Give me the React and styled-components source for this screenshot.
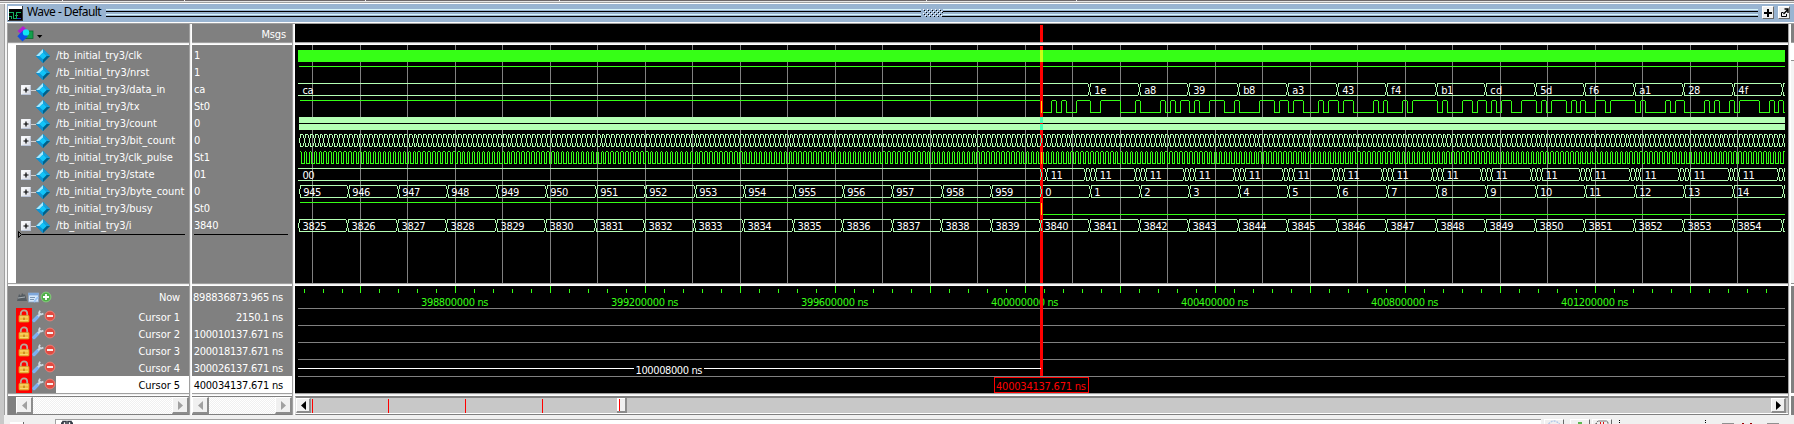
import React from "react";
import styled, { createGlobalStyle, css } from "styled-components";

const UI_FONT = '"DejaVu Sans Condensed", "DejaVu Sans", "Liberation Sans", sans-serif';

const GlobalStyle = createGlobalStyle`
  * { box-sizing: border-box; }
  html, body { margin: 0; padding: 0; background: #f0f0f0; }
  svg { display: block; flex: none; }
`;

const LIME = "#36ff16";
const MINT = "#b4ffb4";
const GREY = "#808080";

/* ---------- window frame ---------- */

const Page = styled.div`
  width: 1794px;
  height: 424px;
  display: flex;
  flex-direction: column;
  overflow: hidden;
  background: #f0f0f0;
  font-family: ${UI_FONT};
  font-stretch: condensed;
  font-size: 11px;
  color: #fff;
`;

const TopStrip = styled.div`
  height: 4px;
  flex: none;
  display: flex;
  border-bottom: 1px solid #fff;
  background: linear-gradient(#6e686a 0 1px, #e4e4e4 1px 2px, #a0a0a0 2px 3px);
`;

const StripCell = styled.div`
  width: ${(p) => p.$w}px;
  height: 1px;
  flex: none;
  border-right: 1px solid #f0f0f0;
`;

const Main = styled.div`
  display: flex;
  height: 411px;
  flex: none;
`;

const LeftEdge = styled.div`
  width: 7px;
  flex: none;
  background: linear-gradient(90deg, #c8c8c8 0 4px, #a0a0a0 4px 5px, #f4f4f4 5px 7px);
`;

const Window = styled.div`
  width: 1787px;
  flex: none;
  display: flex;
  flex-direction: column;
`;

const TitleBar = styled.div`
  height: 20px;
  flex: none;
  display: flex;
  align-items: center;
  padding-left: 1px;
  background: #99b4d1;
  border-bottom: 1px solid #a0a0a0;
  box-shadow: inset 0 -1px 0 #fff;
`;

const TitleText = styled.div`
  width: 79px;
  margin-left: 4px;
  padding-bottom: 3px;
  flex: none;
  font-family: "Noto Sans", "Open Sans", sans-serif;
  font-size: 12px;
  line-height: 16px;
  letter-spacing: -0.55px;
  white-space: nowrap;
  color: #000;
`;

const Stripes = styled.div`
  width: ${(p) => p.$w}px;
  height: 10px;
  flex: none;
  align-self: flex-start;
  margin-top: 4px;
  background: linear-gradient(
    #99b4d1 0 1px, #d8f6fc 1px 2px, #99b4d1 2px 3px, #000 3px 4px,
    #99b4d1 4px 6px, #d8f6fc 6px 7px, #99b4d1 7px 8px, #000 8px 9px, #99b4d1 9px
  );
`;

const GripBox = styled.div`
  align-self: flex-start;
  margin-top: 4px;
`;

const TitleButton = styled.div`
  width: 12px;
  height: 13px;
  flex: none;
  margin: 0 0 2px 4px;
  display: flex;
  align-items: center;
  justify-content: center;
  background: #f0f0f0;
  border: 1px solid;
  border-color: #fff #696969 #696969 #fff;
`;

const Panes = styled.div`
  display: flex;
  height: 391px;
  border-left: 1px solid #a0a0a0;
`;

const Pane = styled.div`
  width: ${(p) => p.$w}px;
  flex: none;
  display: flex;
  flex-direction: column;
  background: ${(p) => p.$bg || GREY};
`;

const ColumnSash = styled.div`
  width: 3px;
  flex: none;
  background: linear-gradient(90deg, #a0a0a0 0 1px, #f0f0f0 1px 2px, #fff 2px 3px);
`;

const RowSash = styled.div`
  height: 3px;
  flex: none;
  background: linear-gradient(#a0a0a0 0 1px, #f0f0f0 1px 2px, #fff 2px 3px);
`;

const Header = styled.div`
  height: 18px;
  flex: none;
  display: flex;
  align-items: center;
  justify-content: ${(p) => (p.$right ? "flex-end" : "flex-start")};
  padding: 2px 6px 0 9px;
`;

/* ---------- signal list ---------- */

const SignalBody = styled.div`
  height: 238px;
  flex: none;
  padding-top: 2px;
  ${(p) => p.$gutter && css`border-left: 8px solid #fff;`}
`;

const SignalRow = styled.div`
  height: 17px;
  display: flex;
  align-items: center;
  padding-left: ${(p) => (p.$value ? 2 : 5)}px;
`;

const Label = styled.span`
  white-space: pre;
  line-height: 13px;
  letter-spacing: ${(p) => p.$ls || 0}px;
  color: ${(p) => (p.$dark ? "#000" : "#fff")};
`;

const SignalName = styled(Label)`
  margin-left: 6px;
`;

const ExpanderSlot = styled.div`
  width: 15px;
  height: 17px;
  flex: none;
  display: flex;
  align-items: center;
  padding-top: 1px;
`;

const Expander = styled.div`
  width: 10px;
  height: 10px;
  display: flex;
  align-items: center;
  justify-content: center;
  border-radius: 1px;
  background: linear-gradient(135deg, #fff, #d4d8e2);
  border: 1px solid #f4f6fa;
  border-right-color: #b9c3d6;
  border-bottom-color: #b9c3d6;
`;

const Stem = styled.div`
  width: 5px;
  height: 1px;
  background: #d0d0d0;
`;

const InsertLine = styled.div`
  display: flex;
  align-items: center;
  height: 7px;
  margin: -3px ${(p) => p.$mr}px 0 ${(p) => p.$ml}px;
`;

const InsertRule = styled.div`
  flex: 1;
  height: 1px;
  background: #000;
`;

/* ---------- cursor list ---------- */

const CursorBody = styled.div`
  height: 107px;
  flex: none;
`;

const CursorRow = styled.div`
  height: ${(p) => (p.$now ? 22 : 17)}px;
  display: flex;
  padding-left: ${(p) => p.$pl || 0}px;
  white-space: nowrap;
`;

const CursorIcons = styled.div`
  width: 40px;
  flex: none;
  display: flex;
  background: ${(p) => (p.$locked ? "linear-gradient(90deg, #f00 0 16px, #808080 16px)" : "none")};
`;

const CursorCell = styled.div`
  flex: 1;
  min-width: 0;
  display: flex;
  align-items: center;
  justify-content: flex-end;
  padding: 1px 9px 0 0;
  background: ${(p) => (p.$active ? "#fff" : "transparent")};
`;

/* ---------- scroll bars ---------- */

const ScrollArea = styled.div`
  height: 19px;
  flex: none;
  display: flex;
  padding: 1px 0 1px ${(p) => p.$pl || 0}px;
  background: ${GREY};
`;

const Track = styled.div`
  flex: 1;
  background: repeating-conic-gradient(#f0f0f0 0 25%, #fff 0 50%) 0 0 / 2px 2px;
`;

const ArrowButton = styled.div`
  width: ${(p) => p.$w || 17}px;
  height: ${(p) => p.$h || 17}px;
  flex: none;
  display: flex;
  align-items: center;
  justify-content: center;
  background: #f0f0f0;
  border: solid;
  border-width: 1px 2px 2px 1px;
  border-color: #fff #8c8c8c #8c8c8c #fff;
`;

const WaveScroll = styled.div`
  height: 19px;
  flex: none;
  display: flex;
  background: #c8c8c8;
  border-left: 1px solid #e0e0e0;
  border-top: 2px solid #808080;
  border-bottom: 1px solid #808080;
  box-shadow: inset 0 -1px 0 #fff;
`;

const RightDock = styled.div`
  width: 6px;
  flex: none;
  background:
    linear-gradient(90deg, #a0a0a0 0 1px, #f4f4f4 1px 2px, #fff 2px 3px, transparent 3px),
    linear-gradient(#808080 0 18px, #a0a0a0 18px 19px, #fff 19px 36px, #909090 36px 37px, #f4f4f4 37px 259px,
      #909090 259px 260px, #fff 260px 262px, #808080 262px 369px, #fff 369px 372px, #808080 372px);
`;

/* ---------- bottom toolbar ---------- */

const Toolbar = styled.div`
  height: 9px;
  flex: none;
  display: flex;
  align-items: flex-end;
  border-left: 4px solid #c8c8c8;
  background: #f0f0f0;
`;

const ToolTab = styled.div`
  width: 14px;
  height: 2px;
  margin: 0 31px 0 6px;
  background: #fff;
  border-right: 1px solid #696969;
`;

const SearchField = styled.div`
  width: 1486px;
  height: 5px;
  flex: none;
  padding-left: 5px;
  background: #fff;
  border-top: 1px solid #a0a0a0;
  border-left: 1px solid #a0a0a0;
`;

const ToolButton = styled.div`
  width: 20px;
  height: 5px;
  flex: none;
  margin-left: ${(p) => p.$ml}px;
  display: flex;
  justify-content: center;
  border: solid;
  border-width: 1px 1px 0 1px;
  border-color: #fff #696969 #fff #fff;
`;

/* ---------- drawings ---------- */

const Glyph = styled.text`
  font-family: ${UI_FONT};
  font-stretch: condensed;
  font-size: 11px;
`;

const Diamond = () => (
  <svg width="14" height="14" viewBox="0 0 14 14">
    <path d="M7 0L14 7L7 14L0 7Z" fill="#0086c4" />
    <path d="M7 0L0 7H3.6L7 3.6Z" fill="#a6eaff" />
    <path d="M7 0L14 7H10.4L7 3.6Z" fill="#199fda" />
    <path d="M7 14L14 7H10.4L7 10.4Z" fill="#006088" />
    <path d="M7 14L0 7H3.6L7 10.4Z" fill="#0f92d2" />
    <path d="M7 3.4L10.6 7L7 10.6L3.4 7Z" fill="#12c4f8" />
  </svg>
);

const WaveLogo = () => (
  <svg width="15" height="15" viewBox="0 0 15 15" shapeRendering="crispEdges">
    <rect width="15" height="15" fill="#fff" />
    <rect x="1" y="3" width="13" height="11" fill="#000" />
    <path d="M0 14.5H15M14.5 0V15" stroke="#333" />
    <path d="M1 6.5H5.5V12.5H8.5V6.5H13 M1 10.5H3.5V13 M7 9.5H10" stroke="#14b060" fill="none" />
    <path d="M9 12.5H13" stroke="#2838c8" />
  </svg>
);

const ShapesIcon = () => (
  <svg width="26" height="16" viewBox="0 0 26 16">
    <rect x="8" y="5" width="8" height="7.5" fill="#12a04c" stroke="#0b6a30" strokeWidth="0.8" />
    <path d="M6 0L11.5 5L6 10L0.5 5Z" fill="#b41cd0" />
    <path d="M5.5 5L11 10.2L5.5 15.5L0.3 10.2Z" fill="#0b50e6" />
    <circle cx="9" cy="6.4" r="3.2" fill="#10e4f4" />
    <path d="M20 9H25.4L22.7 12Z" fill="#000" />
  </svg>
);

const LockIcon = () => (
  <svg width="16" height="17" viewBox="0 0 16 17">
    <path d="M4.8 8V5.6A3.2 3.2 0 0 1 11.2 5.6V8" fill="none" stroke="#b9a89a" strokeWidth="1.8" />
    <rect x="3" y="7.4" width="10" height="6.6" rx="0.8" fill="#f2bd3c" stroke="#d79a2c" strokeWidth="0.8" />
    <path d="M4 9H12M4 12.4H12" stroke="#fbdc7c" strokeWidth="0.9" />
    <rect x="7.3" y="9.6" width="1.4" height="2.4" fill="#c07818" />
  </svg>
);

const WrenchIcon = () => (
  <svg width="12" height="17" viewBox="0 0 12 17">
    <path d="M2 12.5L6 8.3" stroke="#7eb0f0" strokeWidth="3.4" strokeLinecap="round" />
    <path d="M6 8.2L8.6 5.6" stroke="#cdd8e0" strokeWidth="2" />
    <path d="M8 2.6L7 5L8.8 6.6L11.4 5.6" fill="none" stroke="#cdd8e0" strokeWidth="1.7" />
  </svg>
);

const RoundIcon = ({ plus }) => (
  <svg width="12" height={plus ? 22 : 17} viewBox={plus ? "0 -3 12 22" : "0 0 12 17"}>
    <circle cx="6" cy="8" r="4.9" fill={plus ? "#4fae48" : "#e24a40"} stroke={plus ? "#8ed884" : "#f08880"} strokeWidth="0.8" />
    <path d={plus ? "M3 8H9M6 5V11" : "M3 8H9"} stroke="#fff" strokeWidth="1.8" />
  </svg>
);

const NowIcons = () => (
  <svg width="24" height="22" viewBox="0 0 24 22">
    <path d="M1 15L3 8L5 10L6 7L8 9L9 8L11 15Z" fill="#555c62" />
    <path d="M2 12L9 11" stroke="#a8b0b6" strokeWidth="1.2" />
    <rect x="12.5" y="7" width="10" height="9" fill="#d6e8fa" stroke="#8aa6c6" strokeWidth="0.8" />
    <rect x="12.5" y="7" width="10" height="2.4" fill="#7fa8dc" />
    <path d="M14 11.5H19M14 13.5H18" stroke="#7a96b4" />
    <path d="M18 16L22 11" stroke="#9cc4f4" strokeWidth="2" />
  </svg>
);

const Arrow = ({ dir, fill }) => (
  <svg width="5" height="9" viewBox="0 0 5 9">
    <path d={dir === "left" ? "M5 0V9L0 4.5Z" : "M0 0V9L5 4.5Z"} fill={fill} />
  </svg>
);

/* ---------- waveform data ---------- */

const SIGNALS = [
  { name: "clk", value: "1", ls: -0.11 },
  { name: "nrst", value: "1", ls: 0 },
  { name: "data_in", value: "ca", bus: true, ls: -0.04 },
  { name: "tx", value: "St0", ls: -0.01 },
  { name: "count", value: "0", bus: true, ls: -0.05 },
  { name: "bit_count", value: "0", bus: true, ls: -0.03 },
  { name: "clk_pulse", value: "St1", ls: -0.1 },
  { name: "state", value: "01", bus: true, ls: -0.03 },
  { name: "byte_count", value: "0", bus: true, ls: -0.02 },
  { name: "busy", value: "St0", ls: -0.05 },
  { name: "i", value: "3840", bus: true, ls: -0.07 },
];

const CURSORS = [
  ["Cursor 1", "2150.1 ns"],
  ["Cursor 2", "100010137.671 ns"],
  ["Cursor 3", "200018137.671 ns"],
  ["Cursor 4", "300026137.671 ns"],
  ["Cursor 5", "400034137.671 ns"],
];

const X0 = 299;
const X1 = 1785;
const FRAME = 49.47;
const BIT = FRAME / 10;
const DATA = ["1e", "a8", "39", "b8", "a3", "43", "f4", "b1", "cd", "5d", "f6", "a1", "28", "4f"];

const TX = [
  1041, 1051, 1056, 1061, 1066, 1076, 1090, 1100, 1120, 1135, 1140, 1160, 1165, 1170, 1175, 1180, 1189, 1194,
  1199, 1209, 1224, 1234, 1239, 1259, 1274, 1279, 1288, 1293, 1303, 1318, 1323, 1328, 1338, 1343, 1353, 1373,
  1378, 1383, 1387, 1402, 1407, 1412, 1437, 1442, 1447, 1462, 1472, 1477, 1486, 1491, 1496, 1501, 1511, 1521,
  1536, 1541, 1546, 1551, 1566, 1571, 1576, 1580, 1585, 1595, 1605, 1610, 1635, 1640, 1645, 1665, 1670, 1675,
  1684, 1704, 1709, 1714, 1719, 1729, 1734, 1739, 1759, 1769, 1774, 1778, 1783,
];

const range = (a, b) => Array.from({ length: b - a + 1 }, (_, k) => a + k);
const frameX = (n, offset = 0) => Math.floor(1040.5 + offset + FRAME * n);

/* One-pixel runs, given by their top-left pixel. */
const h = (x, y, w) => `M${x} ${y + 0.5}h${w}`;
const v = (x, y, len) => `M${x + 0.5} ${y}v${len}`;

function busPath(y, cuts, start = X0) {
  let d = "";
  let from = start;
  cuts.forEach((x) => {
    if (x - 1 > from) d += h(from, y, x - 1 - from) + h(from, y + 12, x - 1 - from);
    if (x > X0) d += v(x - 1, y + 1, 3) + v(x - 1, y + 9, 3);
    d += v(x, y + 4, 5);
    if (x + 1 < X1) d += v(x + 1, y + 1, 3) + v(x + 1, y + 9, 3);
    from = x + 1;
  });
  if (from < X1) d += h(from, y, X1 - from) + h(from, y + 12, X1 - from);
  return d;
}

/* The top corners of a pulse are cut, the bottom ones are square. */
function levelPath(y, toggles) {
  let d = "";
  let from = X0;
  let high = true;
  toggles.forEach((x) => {
    d += (high ? h(from + 1, y, x - from - 1) : h(from, y + 12, x - from)) + v(x, y + 1, 12);
    from = x;
    high = !high;
  });
  return d + h(from, high ? y : y + 12, X1 - from);
}

const bitCuts = range(-150, 150).map((k) => Math.floor(1041.3 + BIT * k)).filter((x) => x >= X0 && x < X1);
const pulseToggles = range(-300, 300)
  .map((k) => Math.floor(1041.3 + (BIT / 2) * k))
  .filter((x) => x > X0 && x < X1);
const iCuts = range(-15, 15).map((n) => frameX(n));
const byteCuts = range(-15, 15).map((n) => frameX(n, 0.9));
const dataCuts = range(1, 15).map((n) => frameX(n));
const stateCuts = [1041, 1046].concat(
  ...range(1, 15).map((n) => [frameX(n, -4), frameX(n, 0.9), frameX(n, 5.8)].filter((x) => x < X1 - 1))
);

const WaveText = ({ x, y, children, fill = "#fff", w }) => (
  <Glyph x={x} y={y} fill={fill} textLength={w}>
    {children}
  </Glyph>
);

const Waves = () => (
  <svg width="1493" height="238" viewBox="295 45 1493 238">
    <rect x="295" y="45" width="1493" height="238" fill="#000" />
    <g shapeRendering="crispEdges" fill="none" strokeWidth="1">
      <path d={range(0, 30).map((k) => v(Math.round(312 + 47.5 * k), 45, 238)).join("")} stroke={GREY} />
      <rect x="298" y="50" width="1487" height="12" fill={LIME} />
      <path d={h(X0, 66, X1 - X0)} stroke={LIME} />
      <path d={busPath(83, dataCuts, 298)} stroke={MINT} />
      <path d={levelPath(100, TX)} stroke={LIME} />
      <rect x={X0} y="117" width={X1 - X0} height="6" fill={MINT} />
      <rect x={X0} y="123" width={X1 - X0} height="1" fill="#000" />
      <rect x={X0} y="124" width={X1 - X0} height="6" fill={MINT} />
      <path d={busPath(134, bitCuts)} stroke={MINT} />
      <path d={levelPath(151, pulseToggles)} stroke={LIME} />
      <path d={busPath(168, stateCuts, 298)} stroke={MINT} />
      <path d={busPath(185, byteCuts)} stroke={MINT} />
      <path d={levelPath(202, [1041])} stroke={LIME} />
      <path d={busPath(219, iCuts)} stroke={MINT} />
      <rect x="1040" y="46" width="3" height="237" fill="#f00" />
      <rect x="1040" y="50" width="3" height="12" fill="#c8ff16" />
      <rect x="1040" y="117" width="3" height="6" fill="#4affb4" />
      <rect x="1040" y="124" width="3" height="6" fill="#4affb4" />
      <path d={v(1041, 101, 12) + v(1041, 152, 12) + v(1041, 203, 12)} stroke="#ffd800" />
      <path
        d={[134, 168, 185].map((y) => v(1040, y + 1, 3) + v(1041, y + 4, 5) + v(1040, y + 9, 3)).join("") + v(1040, 223, 5) + v(1041, 220, 3) + v(1041, 228, 3)}
        stroke="#4affb4"
      />
    </g>
    <WaveText x={302.5} y={94} w={11}>ca</WaveText>
    <WaveText x={302.5} y={179} w={12}>00</WaveText>
    {DATA.map((t, k) => (
      <WaveText key={t} x={frameX(k + 1) + 5.3} y={94} w={/f/.test(t) ? 10 : 12}>{t}</WaveText>
    ))}
    {range(0, 14).map((n) => (
      <WaveText key={n} x={frameX(n, 0.9) + 9.8} y={179} w={12}>11</WaveText>
    ))}
    {range(-15, 14).map((n) => (
      <React.Fragment key={n}>
        <WaveText x={frameX(n, 0.9) + 4.3} y={196} w={String(n < 0 ? 960 + n : n).length * 6}>
          {n < 0 ? 960 + n : n}
        </WaveText>
        <WaveText x={frameX(n) + 4.6} y={230} w={24}>{3840 + n}</WaveText>
      </React.Fragment>
    ))}
  </svg>
);

const Timeline = () => (
  <svg width="1493" height="107" viewBox="295 286 1493 107">
    <rect x="295" y="286" width="1493" height="107" fill="#000" />
    <path
      shapeRendering="crispEdges"
      d={[304, 323, 342].map((x) => v(x, 289, 4)).join("") +
        range(0, 74).map((k) => (k % 5 ? v(360 + 19 * k, 289, 4) : v(360 + 19 * k, 286, 7))).join("")}
      stroke={LIME}
    />
    {range(0, 6).map((k) => (
      <WaveText key={k} x={421 + 190 * k} y={306} fill={LIME} w={67.5}>
        {`${398800000 + 400000 * k} ns`}
      </WaveText>
    ))}
    <g shapeRendering="crispEdges" fill="none">
      <rect x="1040" y="286" width="3" height="90" fill="#f00" />
      <path d={[308, 325, 342, 359, 376].map((y) => h(298, y, 1487)).join("")} stroke={GREY} />
      <path d={[308, 325, 342, 359].map((y) => h(1040, y, 3)).join("")} stroke="#f00" />
      <path d={h(298, 368, 336) + h(704, 368, 337)} stroke="#fff" />
      <rect x="994.5" y="377.5" width="94" height="15" fill="#000" stroke="#f00" />
    </g>
    <WaveText x={635.5} y={374} w={67}>100008000 ns</WaveText>
    <WaveText x={996} y={390} w={90} fill="#f00">400034137.671 ns</WaveText>
  </svg>
);

const ScrollMap = () => (
  <svg width="1460" height="16" viewBox="311 398 1460 16" shapeRendering="crispEdges">
    <rect x="311" y="398" width="1460" height="15" fill="#c8c8c8" />
    <path d={[312, 388, 465, 542].map((x) => v(x, 399, 14)).join("")} stroke="#f00" />
    <rect x="617" y="398" width="10" height="15" fill="#8c8c8c" />
    <rect x="617" y="398" width="8" height="13" fill="#fff" />
    <rect x="619" y="399" width="6" height="12" fill="#f0f0f0" />
    <path d={v(619, 399, 12)} stroke="#f00" />
    <path d={h(311, 413, 1460)} stroke="#fff" />
  </svg>
);

const Grip = () => (
  <GripBox>
    <svg width="22" height="10" viewBox="0 0 22 10" shapeRendering="crispEdges">
      {[1, 3, 5, 7].map((y, r) => (
        <path key={y} d={range(0, 4).map((k) => h(2 + k * 4 + (r % 2) * 2, y, 1)).join("")} stroke="#fff" />
      ))}
      {[2, 4, 6, 8].map((y, r) => (
        <path key={y} d={range(0, 4).map((k) => h(3 + k * 4 + (r % 2) * 2, y, 1)).join("")} stroke="#000" />
      ))}
    </svg>
  </GripBox>
);

export default function App() {
  return (
    <Page>
      <GlobalStyle />
      <TopStrip>
        {[63, 122, 181, 194, 367, 150].map((w, k) => <StripCell key={k} $w={w} />)}
      </TopStrip>
      <Main>
        <LeftEdge />
        <Window>
          <TitleBar>
            <WaveLogo />
            <TitleText>Wave - Default</TitleText>
            <Stripes $w={815} />
            <Grip />
            <Stripes $w={815} />
            <TitleButton>
              <svg width="8" height="8" viewBox="0 0 8 8"><path d="M0 4H8M4 0V8" stroke="#000" strokeWidth="2" /></svg>
            </TitleButton>
            <TitleButton>
              <svg width="9" height="9" viewBox="0 0 9 9">
                <path d="M3.5 4.5H1.5V8.5H6.5V6" fill="none" stroke="#000" />
                <path d="M3.5 6L7.5 2M4.5 1H8V5" fill="none" stroke="#000" strokeWidth="1.4" />
              </svg>
            </TitleButton>
          </TitleBar>
          <Panes>
            <Pane $w={181}>
              <Header><ShapesIcon /></Header>
              <RowSash />
              <SignalBody $gutter>
                {SIGNALS.map((s) => (
                  <SignalRow key={s.name}>
                    <ExpanderSlot>
                      {s.bus && (
                        <>
                          <Expander>
                            <svg width="6" height="6" viewBox="0 0 6 6"><path d="M0.5 3H5.5M3 0.5V5.5" stroke="#000" strokeWidth="1.2" /></svg>
                          </Expander>
                          <Stem />
                        </>
                      )}
                    </ExpanderSlot>
                    <Diamond />
                    <SignalName $ls={s.ls}>{`/tb_initial_try3/${s.name}`}</SignalName>
                  </SignalRow>
                ))}
                <InsertLine $ml={2} $mr={4}>
                  <svg width="4" height="7" viewBox="0 0 4 7"><path d="M0.5 0.5V6.5L3.5 3.5Z" fill="none" stroke="#000" /></svg>
                  <InsertRule />
                </InsertLine>
              </SignalBody>
              <RowSash />
              <CursorBody>
                <CursorRow $now $pl={8}>
                  <CursorIcons><NowIcons /><RoundIcon plus /></CursorIcons>
                  <CursorCell><Label $ls={-0.2}>Now</Label></CursorCell>
                </CursorRow>
                {CURSORS.map(([name], k) => (
                  <CursorRow key={name} $pl={8}>
                    <CursorIcons $locked><LockIcon /><WrenchIcon /><RoundIcon /></CursorIcons>
                    <CursorCell $active={k === 4}><Label $ls={-0.05} $dark={k === 4}>{name}</Label></CursorCell>
                  </CursorRow>
                ))}
              </CursorBody>
              <RowSash />
              <ScrollArea $pl={8}>
                <ArrowButton><Arrow dir="left" fill="#a0a0a0" /></ArrowButton>
                <Track />
                <ArrowButton><Arrow dir="right" fill="#a0a0a0" /></ArrowButton>
              </ScrollArea>
            </Pane>
            <ColumnSash />
            <Pane $w={100}>
              <Header $right><Label $ls={-0.15}>Msgs</Label></Header>
              <RowSash />
              <SignalBody>
                {SIGNALS.map((s) => (
                  <SignalRow key={s.name} $value><Label $ls={-0.25}>{s.value}</Label></SignalRow>
                ))}
                <InsertLine $ml={2} $mr={4}><InsertRule /></InsertLine>
              </SignalBody>
              <RowSash />
              <CursorBody>
                <CursorRow $now><CursorCell><Label $ls={-0.2}>898836873.965 ns</Label></CursorCell></CursorRow>
                {CURSORS.map(([name, time], k) => (
                  <CursorRow key={name}>
                    <CursorCell $active={k === 4}><Label $ls={-0.25} $dark={k === 4}>{time}</Label></CursorCell>
                  </CursorRow>
                ))}
              </CursorBody>
              <RowSash />
              <ScrollArea>
                <ArrowButton><Arrow dir="left" fill="#a0a0a0" /></ArrowButton>
                <Track />
                <ArrowButton><Arrow dir="right" fill="#a0a0a0" /></ArrowButton>
              </ScrollArea>
            </Pane>
            <ColumnSash />
            <Pane $w={1493} $bg="#000">
              <svg width="1493" height="18" viewBox="295 24 1493 18">
                <rect x="1040" y="25" width="3" height="17" fill="#f00" />
              </svg>
              <RowSash />
              <Waves />
              <RowSash />
              <Timeline />
              <RowSash />
              <WaveScroll>
                <ArrowButton $w={15} $h={15}><Arrow dir="left" fill="#000" /></ArrowButton>
                <ScrollMap />
                <ArrowButton $w={15} $h={15}><Arrow dir="right" fill="#000" /></ArrowButton>
              </WaveScroll>
            </Pane>
            <RightDock />
          </Panes>
        </Window>
      </Main>
      <Toolbar>
        <ToolTab />
        <SearchField>
          <svg width="12" height="4" viewBox="0 0 12 4"><path d="M2 4V1.5H5V4M7 4V1.5H10V4M0 4L2 2M12 4L10 2" stroke="#333a44" strokeWidth="1.6" fill="none" /></svg>
        </SearchField>
        <ToolButton $ml={3}>
          <svg width="12" height="4" viewBox="0 0 12 4"><path d="M0.5 4Q6 -2 11.5 4" fill="none" stroke="#b4c8e8" strokeWidth="1.4" strokeDasharray="2 1" /></svg>
        </ToolButton>
        <ToolButton $ml={6}>
          <svg width="12" height="4" viewBox="0 0 12 4"><path d="M4 2H8V4H4Z" fill="#5cb850" /></svg>
        </ToolButton>
        <ToolButton $ml={2}>
          <svg width="14" height="4" viewBox="0 0 14 4">
            <path d="M1 4Q2 1 4 1H11Q13 1 13 4" fill="none" stroke="#000" strokeDasharray="1 1" />
            <path d="M5.5 4V2M8.5 4V2" stroke="#e01010" />
          </svg>
        </ToolButton>
        <svg width="180" height="5" viewBox="1613 419 180 5" shapeRendering="crispEdges">
          <path d="M1620.5 420v1M1620.5 422v1M1706.5 420v1M1706.5 422v1" stroke="#000" />
          <path d="M1723 423.5h12M1768 423.5h12" stroke="#909090" />
          <path d="M1743 423.5h2M1751 423.5h2" stroke="#900" />
        </svg>
      </Toolbar>
    </Page>
  );
}
